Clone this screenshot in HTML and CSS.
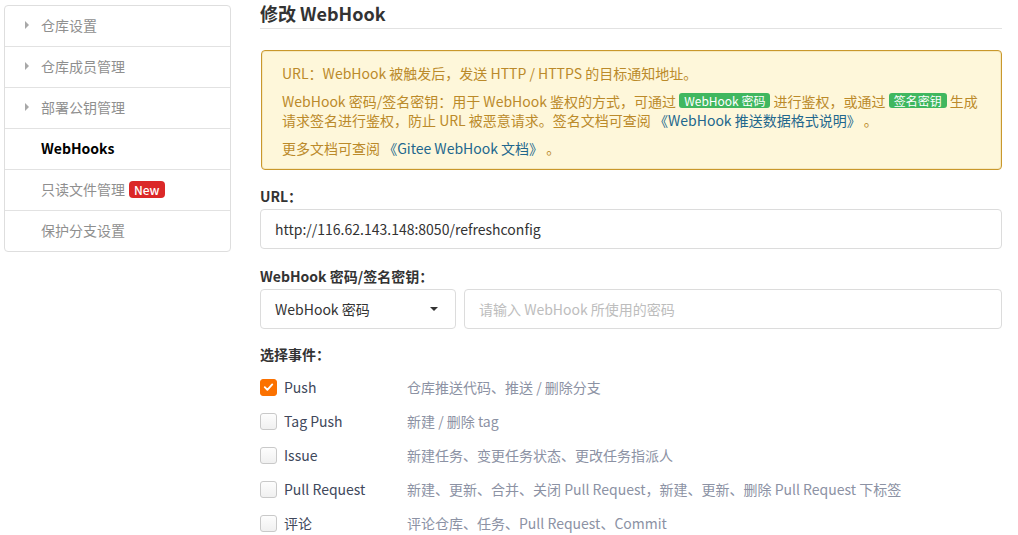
FILE: index.html
```html
<!DOCTYPE html>
<html lang="zh-CN">
<head>
<meta charset="utf-8">
<title>修改 WebHook</title>
<link rel="stylesheet" href="styles.css">
</head>
<body>
<div class="page">
  <aside class="sidebar">
    <div class="side-item"><span class="caret"></span>仓库设置</div>
    <div class="side-item"><span class="caret"></span>仓库成员管理</div>
    <div class="side-item"><span class="caret"></span>部署公钥管理</div>
    <div class="side-item active">WebHooks</div>
    <div class="side-item">只读文件管理<span class="badge-new">New</span></div>
    <div class="side-item">保护分支设置</div>
  </aside>
  <main class="main">
    <h2 class="title">修改 WebHook</h2>
    <div class="notice">
      <p>URL：WebHook 被触发后，发送 HTTP / HTTPS 的目标通知地址。</p>
      <p>WebHook 密码/签名密钥：用于 WebHook 鉴权的方式，可通过 <span class="tag">WebHook 密码</span> 进行鉴权，或通过 <span class="tag">签名密钥</span> 生成请求签名进行鉴权，防止 URL 被恶意请求。签名文档可查阅 <a class="link">《WebHook 推送数据格式说明》</a> 。</p>
      <p>更多文档可查阅 <a class="link">《Gitee WebHook 文档》</a> 。</p>
    </div>
    <div class="field first">
      <label class="label">URL：</label>
      <div class="input">http://116.62.143.148:8050/refreshconfig</div>
    </div>
    <div class="field">
      <label class="label">WebHook 密码/签名密钥：</label>
      <div class="pair">
        <div class="select">WebHook 密码<span class="dropdown"></span></div>
        <div class="input placeholder">请输入 WebHook 所使用的密码</div>
      </div>
    </div>
    <div class="field events">
      <label class="label">选择事件：</label>
      <div class="event"><span class="checkbox checked"><svg viewBox="0 0 16 16" width="16" height="16"><path d="M4 8.2 L6.8 11 L12 5.2" fill="none" stroke="#fff" stroke-width="2" stroke-linecap="round" stroke-linejoin="round"/></svg></span><span class="ev-name">Push</span><span class="ev-desc">仓库推送代码、推送 / 删除分支</span></div>
      <div class="event"><span class="checkbox"></span><span class="ev-name">Tag Push</span><span class="ev-desc">新建 / 删除 tag</span></div>
      <div class="event"><span class="checkbox"></span><span class="ev-name">Issue</span><span class="ev-desc">新建任务、变更任务状态、更改任务指派人</span></div>
      <div class="event"><span class="checkbox"></span><span class="ev-name">Pull Request</span><span class="ev-desc">新建、更新、合并、关闭 Pull Request，新建、更新、删除 Pull Request 下标签</span></div>
      <div class="event"><span class="checkbox"></span><span class="ev-name">评论</span><span class="ev-desc">评论仓库、任务、Pull Request、Commit</span></div>
    </div>
  </main>
</div>
</body>
</html>
```

FILE: styles.css
```css
* { box-sizing: border-box; }
html, body { margin: 0; padding: 0; background: #fff; }
body {
  font-family: "Noto Sans CJK SC", "Noto Sans", sans-serif;
  font-size: 14px;
  color: #333;
  overflow: hidden;
  height: 535px;
}
.page {
  display: flex;
  align-items: flex-start;
  padding: 5px 16px 0 4px;
  gap: 29px;
}
.sidebar {
  width: 227px;
  flex: none;
  border: 1px solid #dedede;
  border-radius: 4px;
}
.side-item {
  height: 41px;
  display: flex;
  align-items: center;
  padding-left: 36px;
  padding-bottom: 2px;
  position: relative;
  color: #8f8f8f;
  border-top: 1px solid #e2e2e2;
  font-size: 14px;
}
.side-item:first-child { border-top: none; height: 40px; }
.side-item.active { color: #000; font-weight: 700; }
.caret {
  position: absolute;
  left: 20px;
  top: 50%;
  margin-top: -5px;
  width: 0; height: 0;
  border-top: 4px solid transparent;
  border-bottom: 4px solid transparent;
  border-left: 4px solid #a8a8a8;
}
.badge-new {
  display: inline-block;
  background: #db2828;
  color: #fff;
  font-size: 12px;
  line-height: 17px;
  padding: 0 5px;
  border-radius: 4px;
  margin-left: 4px;
  font-weight: 500;
}
.main {
  flex: 1;
  min-width: 0;
  margin-top: -5px;
}
.title {
  margin: 0;
  font-size: 18px;
  font-weight: 700;
  color: #333;
  border-bottom: 1px solid #e2e2e2;
  height: 29px;
  line-height: 27px;
}
.notice {
  margin-top: 21px;
  margin-left: 1px;
  background: #fef7da;
  border: 1px solid #c9982c;
  border-radius: 4px;
  padding: 13px 20px 11px;
  color: #bb8a2a;
  box-shadow: 0 0 0 1px rgba(201,152,44,0.15) inset;
}
.notice p { margin: 0 0 8px; line-height: 19.5px; }
.notice p:last-child { margin-bottom: 0; }
.tag {
  display: inline-block;
  background: #40b75f;
  color: #fff;
  font-size: 12px;
  line-height: 15px;
  padding: 0 5px;
  border-radius: 3px;
  vertical-align: 1px;
}
.link { color: #22678d; text-decoration: none; }
.field { margin-top: 17px; }
.field.first { margin-top: 16px; }
.label {
  display: block;
  font-weight: 700;
  color: #333;
  line-height: 20px;
  margin-bottom: 3px;
}
.input, .select {
  height: 40px;
  border: 1px solid #dcdcdc;
  border-radius: 4px;
  display: flex;
  align-items: center;
  padding: 0 14px;
  color: #333;
}
.input.placeholder { color: #bdbdbd; flex: 1; }
.pair { display: flex; gap: 8px; }
.select {
  width: 196px;
  flex: none;
  justify-content: space-between;
}
.dropdown {
  width: 0; height: 0;
  border-left: 4px solid transparent;
  border-right: 4px solid transparent;
  border-top: 4px solid #333;
  margin-right: 3px;
}
.field.events { margin-top: 15px; }
.events .label { margin-bottom: 6px; }
.event {
  height: 34px;
  display: flex;
  align-items: center;
}
.checkbox {
  width: 17px;
  height: 17px;
  flex: none;
  border: 1px solid #c9c9c9;
  border-radius: 3px;
  background: linear-gradient(#fdfdfd, #f0f0f0);
  display: flex;
  align-items: center;
  justify-content: center;
}
.checkbox.checked { background: #fb7100; border-color: #fb7100; }
.checkbox svg { display: block; }
.ev-name { width: 123px; margin-left: 7px; color: #40485b; }
.ev-desc { color: #8c92a4; }
```
